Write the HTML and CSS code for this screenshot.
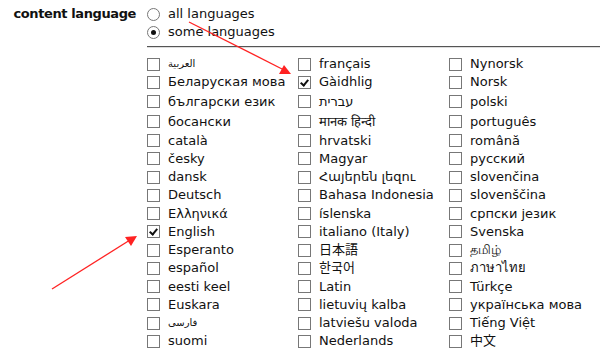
FILE: index.html
```html
<!DOCTYPE html>
<html lang="en">
<head>
    <meta charset="UTF-8">
    <title>Content language</title>
    <link rel="stylesheet" href="styles.css">
</head>
<body>
    <div class="field">
        <div class="field-label">content language</div>
        <div class="field-body">
            <div class="radio-row"><span class="radio"></span>all languages</div>
            <div class="radio-row"><span class="radio on"></span>some languages</div>
            <div class="rule"></div>

            <!-- language list, filled column by column -->
            <div class="lang-grid">
                <div class="lang"><span class="box"></span><span class="ar">العربية</span></div>
                <div class="lang"><span class="box"></span>français</div>
                <div class="lang"><span class="box"></span>Nynorsk</div>

                <div class="lang"><span class="box"></span>Беларуская мова</div>
                <div class="lang"><span class="box on"></span>Gàidhlig</div>
                <div class="lang"><span class="box"></span>Norsk</div>

                <div class="lang tall"><span class="box"></span>български език</div>
                <div class="lang tall"><span class="box"></span>עברית</div>
                <div class="lang tall"><span class="box"></span>polski</div>

                <div class="lang tall"><span class="box"></span>босански</div>
                <div class="lang tall"><span class="box"></span>मानक हिन्दी</div>
                <div class="lang tall"><span class="box"></span>português</div>

                <div class="lang"><span class="box"></span>català</div>
                <div class="lang"><span class="box"></span>hrvatski</div>
                <div class="lang"><span class="box"></span>română</div>

                <div class="lang"><span class="box"></span>česky</div>
                <div class="lang"><span class="box"></span>Magyar</div>
                <div class="lang"><span class="box"></span>русский</div>

                <div class="lang"><span class="box"></span>dansk</div>
                <div class="lang"><span class="box"></span>Հայերեն լեզու</div>
                <div class="lang"><span class="box"></span>slovenčina</div>

                <div class="lang"><span class="box"></span>Deutsch</div>
                <div class="lang"><span class="box"></span>Bahasa Indonesia</div>
                <div class="lang"><span class="box"></span>slovenščina</div>

                <div class="lang"><span class="box"></span>Ελληνικά</div>
                <div class="lang"><span class="box"></span>íslenska</div>
                <div class="lang"><span class="box"></span>српски језик</div>

                <div class="lang"><span class="box on"></span>English</div>
                <div class="lang"><span class="box"></span>italiano (Italy)</div>
                <div class="lang"><span class="box"></span>Svenska</div>

                <div class="lang"><span class="box"></span>Esperanto</div>
                <div class="lang"><span class="box"></span>日本語</div>
                <div class="lang"><span class="box"></span>தமிழ்</div>

                <div class="lang"><span class="box"></span>español</div>
                <div class="lang"><span class="box"></span>한국어</div>
                <div class="lang"><span class="box"></span>ภาษาไทย</div>

                <div class="lang"><span class="box"></span>eesti keel</div>
                <div class="lang"><span class="box"></span>Latin</div>
                <div class="lang"><span class="box"></span>Türkçe</div>

                <div class="lang"><span class="box"></span>Euskara</div>
                <div class="lang"><span class="box"></span>lietuvių kalba</div>
                <div class="lang"><span class="box"></span>українська мова</div>

                <div class="lang"><span class="box"></span><span class="ar">فارسی</span></div>
                <div class="lang"><span class="box"></span>latviešu valoda</div>
                <div class="lang"><span class="box"></span>Tiếng Việt</div>

                <div class="lang"><span class="box"></span>suomi</div>
                <div class="lang"><span class="box"></span>Nederlands</div>
                <div class="lang"><span class="box"></span>中文</div>
            </div>
        </div>
    </div>

    <!-- annotation arrows drawn over the form -->
    <svg class="arrows" width="600" height="358" viewBox="0 0 600 358">
        <g stroke="#f22" stroke-width="1.3" fill="#f22">
            <line x1="189" y1="22" x2="284" y2="70"/>
            <polygon points="291,74 279,74 284,65" stroke="none"/>
            <line x1="52" y1="289" x2="130" y2="240"/>
            <polygon points="137,236 131,246 125,237" stroke="none"/>
        </g>
    </svg>
</body>
</html>
```

FILE: styles.css
```css
body {
    margin: 0;
    padding: 5px 11px;
    font-family: "DejaVu Sans", Verdana, "Noto Sans CJK JP", sans-serif;
    font-size: 13px;
    color: #111;
    background: #fff;
    position: relative;
}

.field {
    display: flex;
}

.field-label {
    flex: none;
    width: 125px;
    font-weight: bold;
    line-height: 18px;
    padding-right: 11px;
    text-align: right;
    white-space: nowrap;
    letter-spacing: -0.4px;
}

.field-body {
    flex: 1;
    margin-right: -11px;
}

.radio-row {
    display: flex;
    align-items: center;
    line-height: 18px;
    gap: 8px;
}

.radio {
    width: 11px;
    height: 11px;
    border: 1px solid #777;
    border-radius: 50%;
    background: #fff;
    position: relative;
}

.radio.on::after {
    content: "";
    position: absolute;
    left: 3px;
    top: 3px;
    width: 5px;
    height: 5px;
    border-radius: 50%;
    background: #111;
}

.rule {
    margin: 5px 0 7px;
    border-top: 1px solid #555;
    border-bottom: 1px solid #ddd;
}

.lang-grid {
    display: grid;
    grid-template-columns: 151px 151px 1fr;
}

.lang {
    display: flex;
    align-items: center;
    gap: 8px;
    line-height: 18.25px;
    white-space: nowrap;
}

.lang.tall {
    line-height: 20px;
}

.box {
    flex: none;
    width: 11px;
    height: 11px;
    border: 1px solid #777;
    background: #fff;
    position: relative;
}

.box.on::after {
    content: "";
    position: absolute;
    left: 3px;
    top: 1px;
    width: 3px;
    height: 6px;
    border: solid #111;
    border-width: 0 2px 2px 0;
    transform: rotate(40deg);
}

.ar {
    font-size: 10px;
}

.arrows {
    position: absolute;
    left: 0;
    top: 0;
    pointer-events: none;
}
```
